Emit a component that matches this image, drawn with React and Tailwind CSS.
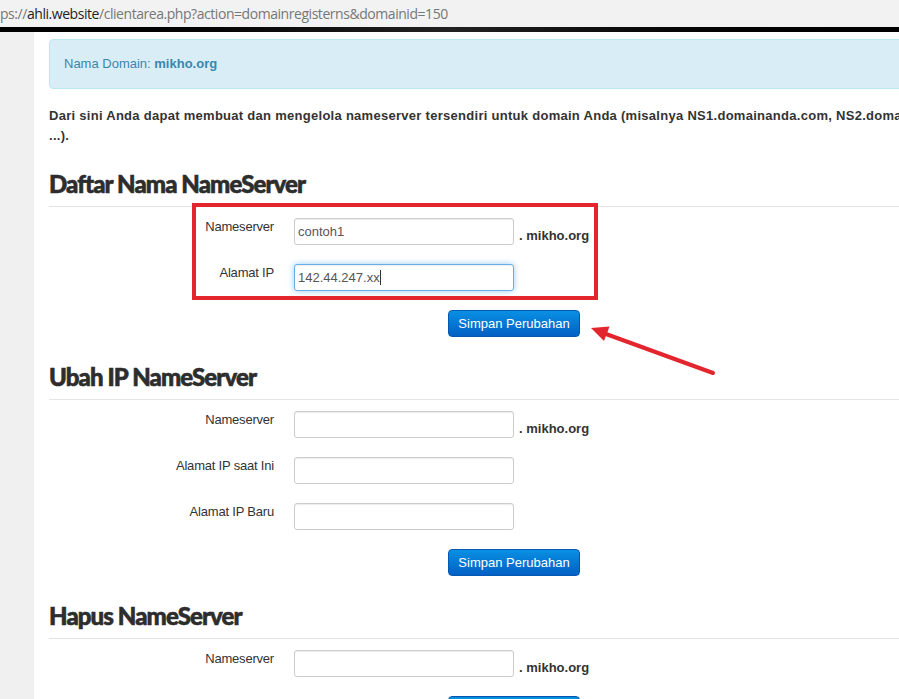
import React from 'react';

const DOMAIN = 'mikho.org';

function Field({ label, value, focused, suffix }) {
    return (
        <div className="flex items-start h-[27px] mb-[19px]">
            <label className="w-[225px] shrink-0 text-right leading-[18px] text-[13px] tracking-[-0.2px] text-[#333]">{label}</label>
            {focused ? (
                <div className="ml-[20px] w-[220px] h-[27px] shrink-0 flex items-center pl-[3px] rounded-[3px] border border-[#66afe9] bg-white shadow-[inset_0_1px_1px_rgba(0,0,0,0.075),0_0_6px_rgba(82,168,236,0.6)] text-[13px] text-[#555]">
                    {value}
                    <span className="inline-block w-px h-[15px] bg-[#333]" />
                </div>
            ) : (
                <input
                    readOnly
                    defaultValue={value}
                    className="ml-[20px] w-[220px] h-[27px] shrink-0 pl-[3px] rounded-[3px] border border-[#cccccc] bg-white shadow-[inset_0_1px_1px_rgba(0,0,0,0.075)] text-[13px] text-[#555] outline-none font-['Liberation_Sans',Arial,sans-serif]"
                />
            )}
            {suffix && (
                <span className="self-end ml-[5px] leading-[18px] text-[13px] font-bold text-[#333]">. {DOMAIN}</span>
            )}
        </div>
    );
}

function SaveButton() {
    return (
        <div className="text-center h-[27px]">
            <button className="w-[132px] h-[27px] rounded-[4px] border border-[#0558b0] bg-gradient-to-b from-[#0a90e4] to-[#055fc4] text-white text-[13px] leading-none font-['Liberation_Sans',Arial,sans-serif]">
                Simpan Perubahan
            </button>
        </div>
    );
}

function Section({ title, first, children }) {
    return (
        <section className={first ? 'mt-[22px]' : 'mt-[24px]'}>
            <h2 className="leading-[32px] pb-[6px] border-b border-[#e5e5e5] text-[24px] font-black tracking-[-0.9px] text-[#2d2d2d] [-webkit-text-stroke:0.6px_#2d2d2d] font-['Lato',sans-serif]">
                {title}
            </h2>
            <div className="mt-[11px]">{children}</div>
        </section>
    );
}

export default function App() {
    return (
        <div className="w-full h-[699px] overflow-hidden bg-white font-['Liberation_Sans',Arial,sans-serif] text-[13px] text-[#333]">
            <div className="h-[27px] bg-[#f2f2f3] flex items-center whitespace-nowrap text-[14px] text-[#777] font-['Open_Sans',sans-serif] tracking-[-0.45px]">
                ps://<span className="text-[#222]">ahli.website</span>/clientarea.php?action=domainregisterns&amp;domainid=150
            </div>
            <div className="h-[5px] bg-gradient-to-r from-black via-[#222] to-black" />

            <div className="flex">
                <div className="w-[34px] shrink-0 bg-[#f0f0f0]" />
                <main className="relative w-[930px] shrink-0 ml-[15px] pt-[7px] pb-10">
                    <div className="h-[50px] flex items-center pl-[14px] rounded-[4px] border border-[#bce8f1] bg-[#d9edf7] text-[#3a87ad]">
                        Nama Domain:&nbsp;<strong>{DOMAIN}</strong>
                    </div>

                    <p className="mt-[17px] leading-[20px] font-bold tracking-[0.28px] text-[#333]">
                        Dari sini Anda dapat membuat dan mengelola nameserver tersendiri untuk domain Anda (misalnya NS1.domainanda.com, NS2.domainanda.com ...).
                    </p>

                    <Section title="Daftar Nama NameServer" first>
                        <Field label="Nameserver" value="contoh1" suffix />
                        <Field label="Alamat IP" value="142.44.247.xx" focused />
                        <SaveButton />
                    </Section>

                    <Section title="Ubah IP NameServer">
                        <Field label="Nameserver" value="" suffix />
                        <Field label="Alamat IP saat Ini" value="" />
                        <Field label="Alamat IP Baru" value="" />
                        <SaveButton />
                    </Section>

                    <Section title="Hapus NameServer">
                        <Field label="Nameserver" value="" suffix />
                        <SaveButton />
                    </Section>

                    {/* annotation: red box + arrow */}
                    <div className="absolute left-[143px] top-[171px] w-[406px] h-[97px] border-[4px] border-[#e3262d] pointer-events-none" />
                    <svg className="absolute left-[536px] top-[288px] pointer-events-none" width="135" height="60" viewBox="0 0 135 60">
                        <line x1="21" y1="14" x2="128" y2="53" stroke="#e3262d" strokeWidth="4" strokeLinecap="round" />
                        <polygon points="6,8 24.5,6.5 19,21" fill="#e3262d" />
                    </svg>
                </main>
            </div>
        </div>
    );
}
